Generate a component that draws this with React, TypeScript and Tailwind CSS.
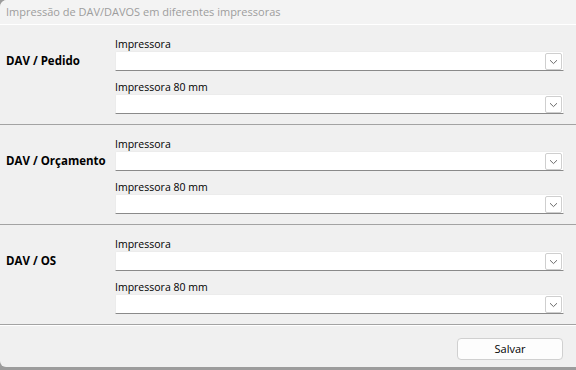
import React from 'react';

const sections = ['DAV / Pedido', 'DAV / Orçamento', 'DAV / OS'];

const Combo: React.FC = () => (
  <div className="relative h-[20px] bg-white border border-[#ececec] border-b-[#8a8a8a] rounded-t-[2px]">
    <div className="absolute right-[1px] top-[1px] w-[17px] h-[17px] border border-[#cfcfcf] rounded-[2px] bg-white flex items-center justify-center">
      <svg width="9" height="6" viewBox="0 0 9 6">
        <path d="M1 1.2 L4.5 4.6 L8 1.2" fill="none" stroke="#6b6b6b" strokeWidth="1" />
      </svg>
    </div>
  </div>
);

const Section: React.FC<{ title: string }> = ({ title }) => (
  <div className="h-[100px] flex border-b border-[#a3a3a3]">
    <div className="w-[115px] pl-[6px] pt-[26px]">
      <div className="h-[20px] flex items-center font-bold text-[11.5px] text-black">{title}</div>
    </div>
    <div className="flex-1 pr-[12px] pt-[12px] flex flex-col">
      <div className="h-[14px] leading-[14px] text-[10.5px] text-black">Impressora</div>
      <Combo />
      <div className="mt-[9px] h-[14px] leading-[14px] text-[10.5px] text-black">Impressora 80 mm</div>
      <Combo />
    </div>
  </div>
);

export default function App() {
  return (
    <div className="w-[576px] h-[370px] bg-[#9c9c9c] overflow-hidden" style={{ fontFamily: '"Open Sans", "Noto Sans", sans-serif' }}>
      <div className="h-[367px] bg-[#f0f0f0] rounded-tl-[7px] rounded-bl-[6px] flex flex-col">
        <div className="h-[25px] bg-[#f3f3f3] border-b border-white rounded-tl-[7px] pl-[6px] pt-[4px] text-[11px] leading-[16px] text-[#9d9d9d]">
          Impressão de DAV/DAVOS em diferentes impressoras
        </div>
        {sections.map((s) => (
          <Section key={s} title={s} />
        ))}
        <div className="flex-1 border-t border-white flex justify-end pt-[12px] pr-[13px]">
          <button className="w-[106px] h-[22px] rounded-[4px] border border-[#d0d0d0] bg-[#fdfdfd] text-[11px] text-black">
            Salvar
          </button>
        </div>
      </div>
    </div>
  );
}
